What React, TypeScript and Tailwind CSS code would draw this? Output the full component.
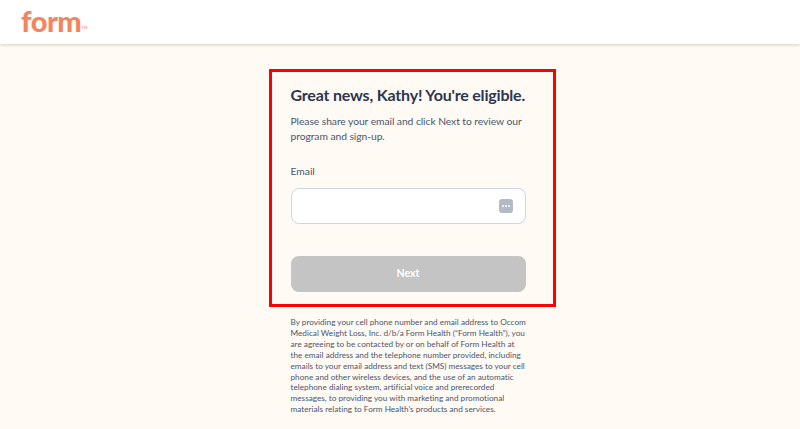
export default function App() {
  const disclaimer = [
    "By providing your cell phone number and email address to Occom",
    "Medical Weight Loss, Inc. d/b/a Form Health (“Form Health”), you",
    "are agreeing to be contacted by or on behalf of Form Health at",
    "the email address and the telephone number provided, including",
    "emails to your email address and text (SMS) messages to your cell",
    "phone and other wireless devices, and the use of an automatic",
    "telephone dialing system, artificial voice and prerecorded",
    "messages, to providing you with marketing and promotional",
    "materials relating to Form Health’s products and services.",
  ];

  return (
    <div className="h-[429px] overflow-hidden bg-[#fffaf3] font-['Lato',sans-serif]">
      {/* Header */}
      <header className="h-[44px] bg-white flex items-center pl-[21px] shadow-[0_1px_3px_rgba(90,80,60,0.25)]">
        <div className="flex items-end">
          <span className="text-[29px] leading-none font-black text-[#f5845e] tracking-[-0.5px] -mt-[3px]">form</span>
          <span className="text-[4px] leading-none text-[#f5845e] mb-[5px]">TM</span>
        </div>
      </header>

      <main className="flex justify-center pl-[24px] pt-[25px]">
        <div className="w-[287px] flex flex-col">
          <div className="h-[238px] border-[3px] border-[#fe0000] pt-[11px] pl-[19px]">
            <h1 className="text-[16px] leading-[24px] font-bold tracking-[-0.19px] text-[#2d3650] whitespace-nowrap">
              Great news, Kathy! You're eligible.
            </h1>
            <p className="mt-[7px] text-[10.3px] leading-[15px] tracking-[-0.06px] text-[#4a5670] whitespace-nowrap">
              Please share your email and click Next to review our
              <br />
              program and sign-up.
            </p>
            <label className="block mt-[20px] text-[10.3px] leading-[15px] text-[#4a5670]">Email</label>
            <div className="mt-[9px] h-[36px] w-[235px] rounded-[8px] border border-[#c9d8e4] bg-white flex items-center justify-end pr-[12px]">
              <div className="w-[14px] h-[14px] rounded-[3px] bg-[#b3bac5] flex items-center justify-center gap-[1px]">
                <span className="w-[2px] h-[2px] bg-white rounded-full" />
                <span className="w-[2px] h-[2px] bg-white rounded-full" />
                <span className="w-[2px] h-[2px] bg-white rounded-full" />
              </div>
            </div>
            <button className="mt-[32px] h-[36px] w-[235px] rounded-[8px] bg-[#c4c4c4] text-white text-[10.6px] font-bold">
              Next
            </button>
          </div>

          <div className="mt-[10px] ml-[22px] text-[8.2px] leading-[10.9px] tracking-[0.01px] text-[#4a5670] whitespace-nowrap">
            {disclaimer.map((line) => (
              <div key={line}>{line}</div>
            ))}
          </div>
        </div>
      </main>
    </div>
  );
}
